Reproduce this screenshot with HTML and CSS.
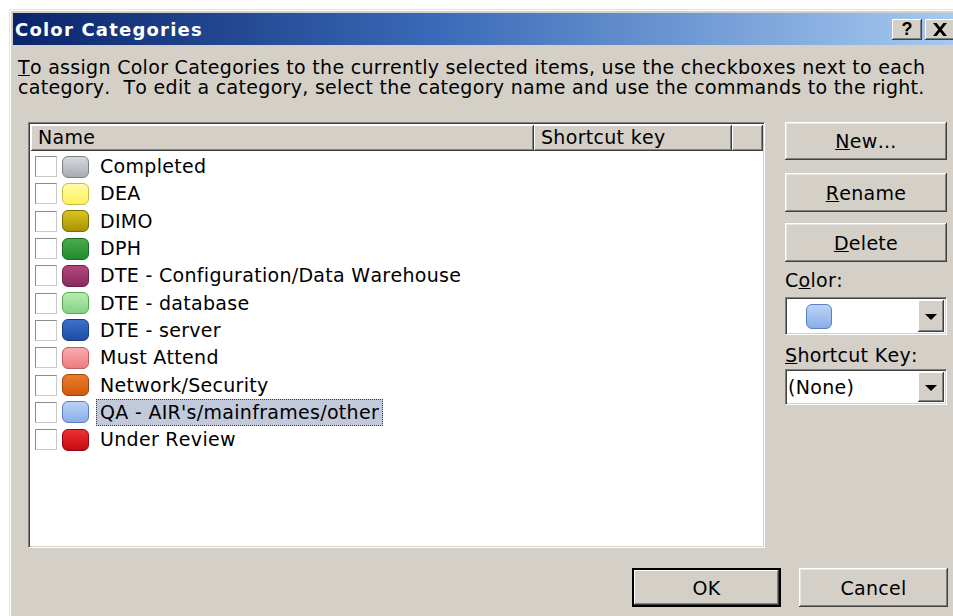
FILE: index.html
```html
<!DOCTYPE html>
<html lang="en">
<head>
<meta charset="utf-8">
<title>Color Categories</title>
<link rel="stylesheet" href="styles.css">
</head>
<body>
<div class="window">
  <div class="titlebar">
    <span class="title">Color Categories</span>
    <div class="caption-buttons">
      <span class="cap-btn help">?</span>
      <span class="cap-btn close">
        <svg width="16" height="13" viewBox="0 0 16 13"><path d="M1 0h3.6l3.4 4.3 3.4-4.3h3.6l-5.2 6.5 5.2 6.5h-3.6l-3.4-4.3-3.4 4.3h-3.6l5.2-6.5z" fill="#000"/></svg>
      </span>
    </div>
  </div>

  <div class="content">
    <p class="intro"><u>T</u>o assign Color Categories to the currently selected items, use the checkboxes next to each category.&nbsp; To edit a category, select the category name and use the commands to the right.</p>

    <div class="main">
      <div class="listview">
        <div class="lv-head">
          <div class="hcell col-name">Name</div>
          <div class="hcell col-key">Shortcut key</div>
          <div class="hcell col-fill"></div>
        </div>
        <div class="lv-body">
          <div class="row"><span class="check"></span><span class="swatch sw-gray"></span><span class="label">Completed</span></div>
          <div class="row"><span class="check"></span><span class="swatch sw-yellow"></span><span class="label">DEA</span></div>
          <div class="row"><span class="check"></span><span class="swatch sw-olive"></span><span class="label">DIMO</span></div>
          <div class="row"><span class="check"></span><span class="swatch sw-green"></span><span class="label">DPH</span></div>
          <div class="row"><span class="check"></span><span class="swatch sw-maroon"></span><span class="label">DTE - Configuration/Data Warehouse</span></div>
          <div class="row"><span class="check"></span><span class="swatch sw-lightgreen"></span><span class="label">DTE - database</span></div>
          <div class="row"><span class="check"></span><span class="swatch sw-blue"></span><span class="label">DTE - server</span></div>
          <div class="row"><span class="check"></span><span class="swatch sw-pink"></span><span class="label">Must Attend</span></div>
          <div class="row"><span class="check"></span><span class="swatch sw-orange"></span><span class="label">Network/Security</span></div>
          <div class="row"><span class="check"></span><span class="swatch sw-lightblue"></span><span class="label selected">QA - AIR's/mainframes/other</span></div>
          <div class="row"><span class="check"></span><span class="swatch sw-red"></span><span class="label">Under Review</span></div>
        </div>
      </div>

      <div class="side">
        <button class="btn btn-new"><u>N</u>ew...</button>
        <button class="btn btn-rename"><u>R</u>ename</button>
        <button class="btn btn-delete"><u>D</u>elete</button>
        <div class="field-label label-color">C<u>o</u>lor:</div>
        <div class="combo">
          <div class="combo-value"><span class="swatch sw-lightblue combo-swatch"></span></div>
          <span class="drop"><span class="arrow"></span></span>
        </div>
        <div class="field-label label-key"><u>S</u>hortcut Key:</div>
        <div class="combo combo-key">
          <div class="combo-value combo-text">(None)</div>
          <span class="drop"><span class="arrow"></span></span>
        </div>
      </div>
    </div>

    <div class="footer">
      <button class="btn btn-default">OK</button>
      <button class="btn">Cancel</button>
    </div>
  </div>
</div>
</body>
</html>
```

FILE: styles.css
```css
html, body {
  margin: 0;
  padding: 0;
  background: #ffffff;
  overflow: hidden;
  width: 953px;
  height: 616px;
}

body {
  font-family: "DejaVu Sans", sans-serif;
  font-size: 19px;
  letter-spacing: 0.3px;
  font-kerning: none;
  color: #000;
}

/* Dialog frame */
.window {
  margin: 9px 0 0 9px;
  width: 951px;
  height: 620px;
  box-sizing: border-box;
  background: #d4d0c8;
  border: 1px solid;
  border-color: #e6e3dc #404040 #404040 #e6e3dc;
  box-shadow: inset 1px 1px 0 #ffffff, inset -1px -1px 0 #808080;
  padding: 3px;
}

.titlebar {
  height: 32px;
  display: flex;
  align-items: center;
  justify-content: space-between;
  padding: 0 0 0 2px;
  background: linear-gradient(to right, #0a246a 0%, #3a6ab8 45%, #a6caf0 100%);
}

.title {
  color: #fff;
  font-weight: bold;
  font-size: 18px;
  letter-spacing: 1.2px;
}

.caption-buttons {
  display: flex;
  gap: 3px;
  margin-right: 1px;
}

.cap-btn {
  width: 30px;
  height: 21px;
  box-sizing: border-box;
  background: #d4d0c8;
  box-shadow: inset -1px -1px 0 #404040, inset 1px 1px 0 #ffffff, inset -2px -2px 0 #808080;
  display: flex;
  align-items: center;
  justify-content: center;
  font-family: "Liberation Sans", sans-serif;
  font-weight: bold;
  font-size: 18px;
  letter-spacing: 0;
  line-height: 1;
}

/* Dialog body */
.content {
  padding: 0 8px 0 5px;
}

.intro {
  margin: 12px 0 0 0;
  line-height: 20px;
  width: 935px;
}

.main {
  display: flex;
  gap: 20px;
  margin: 25px 0 0 10px;
}

/* List view */
.listview {
  width: 737px;
  height: 426px;
  box-sizing: border-box;
  background: #fff;
  border: 1px solid;
  border-color: #808080 #ffffff #ffffff #808080;
  box-shadow: inset 1px 1px 0 #404040, inset -1px -1px 0 #d4d0c8;
  padding: 2px 1px 1px 2px;
  display: flex;
  flex-direction: column;
}

.lv-head {
  display: flex;
  height: 26px;
  flex: none;
}

.hcell {
  box-sizing: border-box;
  height: 26px;
  background: #d4d0c8;
  box-shadow: inset -1px -1px 0 #404040, inset 1px 1px 0 #ffffff, inset -2px -2px 0 #808080;
  padding: 1px 0 0 7px;
  line-height: 22px;
}

.col-name { width: 503px; }
.col-key { width: 198px; }
.col-fill { flex: 1; }

.lv-body {
  padding-top: 2px;
}

.row {
  display: flex;
  align-items: center;
  height: 27.3px;
  padding-left: 4px;
}

.check {
  width: 22px;
  height: 21px;
  box-sizing: border-box;
  background: #fff;
  border: 1px solid;
  border-color: #8c8c8c #c8c8c8 #c8c8c8 #8c8c8c;
  flex: none;
}

.swatch {
  display: inline-block;
  width: 27px;
  height: 22px;
  box-sizing: border-box;
  border-radius: 6px;
  border: 1px solid rgba(0, 0, 0, 0.35);
  margin-left: 5px;
  flex: none;
}

.sw-gray { background: linear-gradient(#d6d8dc, #a9acb2); border-color: #7c7f86; }
.sw-yellow { background: linear-gradient(#fffca8, #fff05a); border-color: #c8bc48; }
.sw-olive { background: linear-gradient(#d8c420, #a89200); border-color: #7c6c00; }
.sw-green { background: linear-gradient(#48ac4c, #238a2c); border-color: #1a6a20; }
.sw-maroon { background: linear-gradient(#b0487c, #8c2a60); border-color: #6a1e48; }
.sw-lightgreen { background: linear-gradient(#b6ecb2, #86d282); border-color: #5aa458; }
.sw-blue { background: linear-gradient(#3c72c8, #1c4ea4); border-color: #163c80; }
.sw-pink { background: linear-gradient(#f8acac, #ec7c7e); border-color: #c05c5e; }
.sw-orange { background: linear-gradient(#ec7c2c, #d05a0c); border-color: #a04408; }
.sw-lightblue { background: linear-gradient(#bcd2f6, #8aaee8); border-color: #5a7ec0; }
.sw-red { background: linear-gradient(#ee3030, #c40c14); border-color: #900810; }

.label {
  margin-left: 7px;
  padding: 0 3px;
  line-height: 25px;
  border: 1px solid transparent;
  white-space: nowrap;
}

.label.selected {
  background: #c2c9da;
  border: 1px dotted #3c3c50;
}

/* Command column */
.side {
  width: 162px;
  display: flex;
  flex-direction: column;
}

.btn {
  font: inherit;
  letter-spacing: inherit;
  color: #000;
  background: #d4d0c8;
  border: none;
  box-sizing: border-box;
  height: 39px;
  padding: 0;
  box-shadow: inset -1px -1px 0 #404040, inset 1px 1px 0 #ffffff, inset -2px -2px 0 #808080, inset 2px 2px 0 #e8e6e2;
}

.side .btn { width: 162px; }
.btn-new { height: 38px; }
.btn-rename { margin-top: 13px; }
.btn-delete { margin-top: 11px; }

.field-label {
  line-height: 22px;
}

.label-color { margin-top: 7px; }
.label-key { margin-top: 9px; }

.combo {
  margin-top: 6px;
  height: 38px;
  box-sizing: border-box;
  border: 1px solid;
  border-color: #808080 #ffffff #ffffff #808080;
  box-shadow: inset 1px 1px 0 #404040, inset -1px -1px 0 #d4d0c8;
  background: #fff;
  display: flex;
  padding: 2px;
}

.combo-key {
  margin-top: 3px;
  height: 36px;
}

.combo-value {
  flex: 1;
  display: flex;
  align-items: center;
}

.combo-swatch {
  width: 26px;
  height: 25px;
  margin-left: 18px;
  border-radius: 6px;
}

.combo-text {
  padding-left: 0;
}

.drop {
  width: 26px;
  background: #d4d0c8;
  box-shadow: inset -1px -1px 0 #404040, inset 1px 1px 0 #ffffff, inset -2px -2px 0 #808080;
  display: flex;
  align-items: center;
  justify-content: center;
}

.arrow {
  width: 0;
  height: 0;
  border-left: 6px solid transparent;
  border-right: 6px solid transparent;
  border-top: 6px solid #000;
  margin-top: 1px;
}

/* Footer buttons */
.footer {
  display: flex;
  justify-content: flex-end;
  gap: 18px;
  margin-top: 20px;
}

.footer .btn { width: 149px; }

.btn-default {
  outline: 2px solid #000;
  outline-offset: -2px;
  box-shadow: inset -3px -3px 0 #404040, inset 3px 3px 0 #ffffff, inset -4px -4px 0 #808080;
}
```
